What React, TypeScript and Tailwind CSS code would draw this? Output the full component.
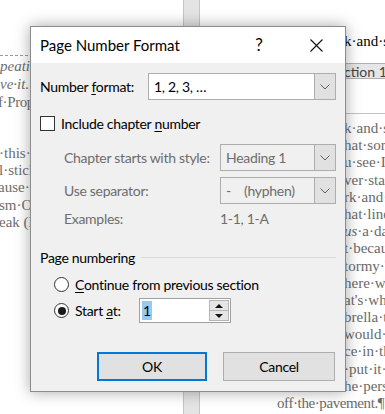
import React from "react";

const ui = { fontFamily: 'Lato, "Noto Sans", sans-serif' };
const doc = { fontFamily: '"Liberation Serif", serif' };

const rightLines = [
  "k·and·s",
  "hat·sort",
  "u·see·I",
  "ver·star",
  "rk·and·",
  "hat·line",
  "",
  "t·becau",
  "tormy·b",
  "here·wa",
  "at's·wh",
  "brella·to",
  "would·f",
  "ce·in·th",
  "·put·it·r",
  "he·pers",
];

const Chevron = () => (
  <svg width="10" height="6" viewBox="0 0 10 6" className="shrink-0">
    <polyline points="0.5,0.5 5,5 9.5,0.5" fill="none" stroke="#5f5f5f" strokeWidth="1" />
  </svg>
);

const Combo = ({
  value,
  width,
  disabled,
}: {
  value: string;
  width: string;
  disabled?: boolean;
}) => (
  <div
    className={`flex h-full border border-[#adadad] ${width} ${
      disabled ? "bg-[#f0f0f0] text-[#6d6d6d]" : "bg-white text-black"
    }`}
  >
    <div className="flex-1 flex items-center pl-[5px] whitespace-pre">{value}</div>
    <div className="w-[21px] flex items-center justify-center bg-[#e1e1e1] border-l border-[#adadad]">
      <Chevron />
    </div>
  </div>
);

const Radio = ({ checked }: { checked?: boolean }) => (
  <div className="w-[15px] h-[15px] rounded-full border border-[#333] bg-white flex items-center justify-center shrink-0">
    {checked && <div className="w-[8px] h-[8px] rounded-full bg-[#1a1a1a]" />}
  </div>
);

const Dialog = () => (
  <div
    className="absolute left-[30px] top-[26px] w-[316px] h-[366px] border border-[#8c8c8c] bg-[#f0f0f0] shadow-[0_0_14px_rgba(0,0,0,0.35)] flex flex-col text-[14px] tracking-[-0.3px] text-black whitespace-nowrap"
    style={ui}
  >
    {/* title bar */}
    <div className="h-[36px] bg-white flex items-center pl-[9px] shrink-0 tracking-normal">
      <span className="text-[15px] flex-1 mt-[1px]">Page Number Format</span>
      <span className="text-[17px] w-[20px] text-center mr-[41px]">?</span>
      <svg width="13" height="13" viewBox="0 0 13 13" className="mr-[22px]">
        <path d="M0.5 0.5 L12.5 12.5 M12.5 0.5 L0.5 12.5" stroke="#111" strokeWidth="1.1" />
      </svg>
    </div>

    <div className="flex flex-col px-[9px]">
      <div className="mt-[10px] h-[27px] flex items-center">
        <span className="w-[108px]">
          Number <span className="underline underline-offset-2">f</span>ormat:
        </span>
        <Combo value="1, 2, 3, …" width="w-[188px]" />
      </div>

      <div className="mt-[15px] h-[16px] flex items-center gap-[6px]">
        <div className="w-[15px] h-[15px] border border-[#333] bg-white shrink-0" />
        <span>
          Include chapter <span className="underline underline-offset-2">n</span>umber
        </span>
      </div>

      <div className="mt-[13px] h-[27px] flex items-center pl-[24px] text-[#6d6d6d]">
        <span className="w-[156px]">Chapter starts with style:</span>
        <Combo value="Heading 1" width="w-[116px]" disabled />
      </div>

      <div className="mt-[6px] h-[27px] flex items-center pl-[24px] text-[#6d6d6d]">
        <span className="w-[156px]">Use separator:</span>
        <Combo value="-    (hyphen)" width="w-[116px]" disabled />
      </div>

      <div className="mt-[6px] h-[16px] flex items-center pl-[24px] text-[#6d6d6d]">
        <span className="w-[156px]">Examples:</span>
        <span>1-1, 1-A</span>
      </div>

      <div className="mt-[23px] h-[16px] flex items-center gap-[6px]">
        <span>Page numbering</span>
        <div className="flex-1 h-px bg-[#dcdcdc]" />
      </div>

      <div className="mt-[11px] h-[16px] flex items-center pl-[14px] gap-[6px]">
        <Radio />
        <span>
          <span className="underline underline-offset-2">C</span>ontinue from previous section
        </span>
      </div>

      <div className="mt-[6px] h-[25px] flex items-center pl-[14px]">
        <Radio checked />
        <span className="ml-[6px] w-[64px]">
          Start <span className="underline underline-offset-2">a</span>t:
        </span>
        <div className="w-[92px] h-full border border-[#a0a0a0] bg-white flex">
          <div className="flex-1 flex items-center pl-[2px]">
            <span className="bg-[#99c9ef] h-[19px] leading-[19px] px-[1px]">1</span>
          </div>
          <div className="w-[20px] flex flex-col my-[1px] mr-[1px]">
            <div className="flex-1 bg-[#e5e5e5] border border-[#b5b5b5] flex items-center justify-center">
              <svg width="8" height="4" viewBox="0 0 8 4">
                <polygon points="4,0 8,4 0,4" fill="#111" />
              </svg>
            </div>
            <div className="flex-1 bg-[#e5e5e5] border border-t-0 border-[#b5b5b5] flex items-center justify-center">
              <svg width="8" height="4" viewBox="0 0 8 4">
                <polygon points="0,0 8,0 4,4" fill="#111" />
              </svg>
            </div>
          </div>
        </div>
      </div>

      <div className="mt-[29px] h-[29px] flex pl-[57px] gap-[16px]">
        <div className="w-[110px] h-full bg-[#e1e1e1] border-2 border-[#0078d7] flex items-center justify-center">
          OK
        </div>
        <div className="w-[112px] h-full bg-[#e1e1e1] border border-[#adadad] flex items-center justify-center">
          Cancel
        </div>
      </div>
    </div>
  </div>
);

export default function App() {
  return (
    <div className="relative w-[385px] h-[414px] overflow-hidden bg-white flex" style={doc}>
      {/* left page */}
      <div className="w-[183px] flex flex-col text-[15px] text-[#6e6e6e] whitespace-nowrap overflow-hidden">
        <div className="mt-[55px] border-t border-dashed border-[#9a9a9a]" />
        <div className="h-[17.3px] leading-[17.3px] mt-[2px] italic">peating·the·refrain</div>
        <div className="h-[17.3px] leading-[17.3px] mt-[1px] italic">ve·it.·</div>
        <div className="h-[17.3px] leading-[17.3px] -ml-[2px] tracking-[-0.4px]">f·Property</div>
        <div className="h-[34px]" />
        <div className="h-[17.3px] leading-[17.3px] -ml-[1px]">·this·season</div>
        <div className="h-[17.3px] leading-[17.3px] -ml-[1px]">l·sticky</div>
        <div className="h-[17.3px] leading-[17.3px] -ml-[2px]">ause·the</div>
        <div className="h-[17.3px] leading-[17.3px] -ml-[1px]">sm·Or</div>
        <div className="h-[17.3px] leading-[17.3px] -ml-[1px]">eak (I</div>
      </div>

      {/* gap between pages */}
      <div className="w-[17px] bg-[#e4e4e4] border-x border-[#c6c6c6]" />

      {/* right page */}
      <div className="flex-1 flex flex-col text-[15px] whitespace-nowrap overflow-hidden">
        <div className="mt-[33px] h-[17px] leading-[17px] pl-[144px] text-black">k·and·s</div>
        <div
          className="mt-[13px] h-[16px] ml-[120px] bg-[#e6e6e6] border-y border-[#b0b0b0] flex items-center pl-[24px] text-[14px] text-[#444]"
          style={ui}
        >
          ction 10
        </div>
        <div className="mt-[34px] border-t border-[#c4c4c4]" />
        <div className="mt-[6px] flex flex-col text-[#6a6a6a]">
          {rightLines.map((l, i) => (
            <div key={i} className="h-[17.2px] leading-[17.2px] pl-[144px]">
              {i === 6 ? (
                <>
                  <span className="italic">us</span>·a·dar
                </>
              ) : (
                l
              )}
            </div>
          ))}
          <div className="h-[17.2px] leading-[17.2px] pl-[77px] tracking-[-0.4px]">off·the·pavement.¶</div>
        </div>
      </div>

      <Dialog />
    </div>
  );
}
